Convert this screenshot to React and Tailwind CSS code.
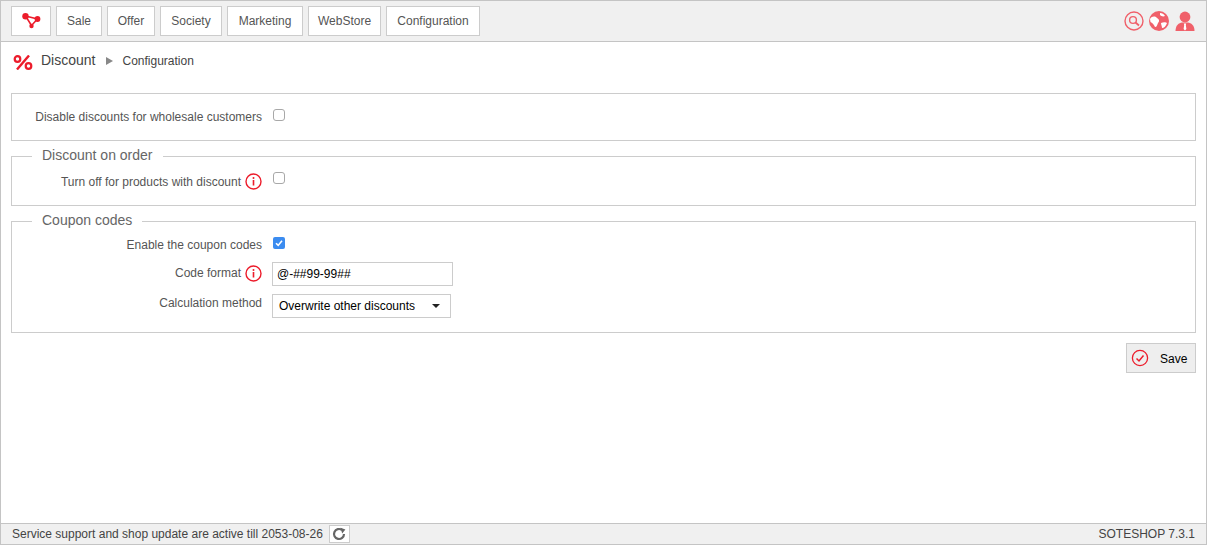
import React from "react";

function InfoIcon() {
  return (
    <svg width="17" height="17" viewBox="0 0 17 17" className="shrink-0">
      <circle cx="8.5" cy="8.5" r="7.5" fill="none" stroke="#ec1c2b" strokeWidth="1.4" />
      <circle cx="8.5" cy="5" r="1" fill="#ec1c2b" />
      <rect x="7.7" y="7" width="1.6" height="5.5" fill="#ec1c2b" />
    </svg>
  );
}

function Checkbox({ checked }) {
  if (checked) {
    return (
      <span className="ml-[1px] flex h-[12px] w-[12px] items-center justify-center rounded-[2px] bg-[#3b8cf0]">
        <svg width="10" height="10" viewBox="0 0 10 10">
          <path d="M2 5.2 L4.2 7.4 L8 2.8" fill="none" stroke="#fff" strokeWidth="1.6" />
        </svg>
      </span>
    );
  }
  return <span className="ml-[1px] block h-[12px] w-[12px] rounded-[3px] border border-[#a8a8a8] bg-white" />;
}

function NavButton({ children, className }) {
  return (
    <div className={"flex h-[30px] items-center justify-center border border-[#cccccc] bg-white text-[12px] text-[#555555] " + className}>
      {children}
    </div>
  );
}

function Legend({ children }) {
  return <legend className="ml-[20px] px-[10px] pb-[2px] text-[14px] leading-[16px] text-[#666666]">{children}</legend>;
}

function Row({ label, info, children, className, labelClass = "" }) {
  return (
    <div className={"flex " + className}>
      <div className={"flex w-[250px] items-center justify-end gap-[4px] text-[12px] text-[#555555] " + labelClass}>
        <span>{label}</span>
        {info && <InfoIcon />}
      </div>
      <div className="ml-[10px] flex items-center">{children}</div>
    </div>
  );
}

export default function App() {
  return (
    <div className="flex h-[545px] w-[1207px] flex-col border border-[#c4c4c4] bg-white font-['Liberation_Sans',Arial,sans-serif]">
      <header className="flex h-[41px] shrink-0 items-center border-b border-[#c4c4c4] bg-[#f0f0f0] pl-[10px] pr-[11px]">
        <nav className="flex gap-[5px]">
          <NavButton className="w-[40px]">
            <svg width="19" height="16" viewBox="0 0 19 16">
              <path d="M3.5 3 L15.5 6 L9.5 12.5 Z" fill="none" stroke="#ec1c2b" strokeWidth="1.6" />
              <circle cx="3.5" cy="3.2" r="3.2" fill="#ec1c2b" />
              <circle cx="15.5" cy="6" r="2.9" fill="#ec1c2b" />
              <circle cx="9.5" cy="13" r="2.2" fill="#ec1c2b" />
            </svg>
          </NavButton>
          <NavButton className="w-[46px]">Sale</NavButton>
          <NavButton className="w-[48px]">Offer</NavButton>
          <NavButton className="w-[62px]">Society</NavButton>
          <NavButton className="w-[76px]">Marketing</NavButton>
          <NavButton className="w-[73px]">WebStore</NavButton>
          <NavButton className="w-[94px]">Configuration</NavButton>
        </nav>
        <div className="ml-auto flex items-center gap-[5px]">
          <svg width="20" height="20" viewBox="0 0 20 20">
            <circle cx="10" cy="10" r="9" fill="none" stroke="#f0606a" strokeWidth="1.4" />
            <circle cx="9" cy="9" r="3.4" fill="none" stroke="#f0606a" strokeWidth="1.4" />
            <path d="M11.5 11.5 L15 14.5" stroke="#f0606a" strokeWidth="1.8" />
          </svg>
          <svg width="20" height="20" viewBox="0 0 20 20">
            <circle cx="10" cy="10" r="10" fill="#f0606a" />
            <path d="M1 8 C3 5 6 5 8 7 C10 8 11 10 9 12 C8 14 8 16 6 16 C5 14 4 12 1.5 11 Z M12 12 C14 11 17 11 18 12 C17 15 15 17 13 17 C13 15 12 14 12 12 Z M11 2 C13 2 15 3 16 5 C14 6 12 5 11 4 Z" fill="#ffffff" />
          </svg>
          <svg width="20" height="20" viewBox="0 0 20 20" className="ml-[1px]">
            <circle cx="10" cy="6" r="5.4" fill="#f0606a" />
            <path d="M0.5 20 C0.5 14 4 12 7 11.5 L13 11.5 C16 12 19.5 14 19.5 20 Z" fill="#f0606a" />
            <path d="M8.8 12.5 H11.2 L10.8 14 L11.4 18 L10 19.5 L8.6 18 L9.2 14 Z" fill="#ffffff" />
          </svg>
        </div>
      </header>

      <main className="flex min-h-0 flex-1 flex-col px-[10px]">
        <div className="flex h-[38px] items-center pl-[2px]">
          <svg width="20" height="15" viewBox="0 0 20 15" className="mt-[2px]">
            <circle cx="4.5" cy="4" r="2.8" fill="none" stroke="#ec1c2b" strokeWidth="2.2" />
            <circle cx="15.5" cy="11" r="2.8" fill="none" stroke="#ec1c2b" strokeWidth="2.2" />
            <path d="M16 0.5 L4 14.5" stroke="#ec1c2b" strokeWidth="2.4" />
          </svg>
          <span className="mb-[2px] ml-[8px] text-[14px] text-[#444444]">Discount</span>
          <svg width="7" height="8" viewBox="0 0 7 8" className="ml-[11px]">
            <path d="M0 0 L7 4 L0 8 Z" fill="#888888" />
          </svg>
          <span className="ml-[9px] text-[12px] text-[#444444]">Configuration</span>
        </div>

        <div className="mt-[13px] flex h-[48px] items-start border border-[#cccccc] pt-[16px]">
          <Row label="Disable discounts for wholesale customers" className="h-[14px] w-full">
            <span className="-mt-[4px]"><Checkbox /></span>
          </Row>
        </div>

        <fieldset className="mt-[6px] h-[59px] border border-[#cccccc] pt-[8px]">
          <Legend>Discount on order</Legend>
          <Row label="Turn off for products with discount" info className="h-[17px]">
            <span className="-mt-[8px]"><Checkbox /></span>
          </Row>
        </fieldset>

        <fieldset className="mt-[6px] h-[121px] border border-[#cccccc] pt-[6px]">
          <Legend>Coupon codes</Legend>
          <Row label="Enable the coupon codes" className="h-[17px]">
            <span className="-mt-[3px]"><Checkbox checked /></span>
          </Row>
          <Row label="Code format" info labelClass="pb-[2px]" className="mt-[9px] h-[24px]">
            <input readOnly value="@-##99-99##" className="h-[24px] w-[181px] border border-[#cccccc] bg-white px-[4px] text-[12px] text-black outline-none" />
          </Row>
          <div className="mt-[8px] flex">
            <div className="mt-[2px] flex h-[14px] w-[250px] justify-end text-[12px] leading-[14px] text-[#555555]">Calculation method</div>
            <div className="ml-[10px] flex h-[24px] w-[179px] items-center justify-between border border-[#cccccc] bg-white pl-[6px] pr-[10px] text-[12px] text-black">
              <span>Overwrite other discounts</span>
              <svg width="8" height="4" viewBox="0 0 8 4"><path d="M0 0 H8 L4 4 Z" fill="#222222" /></svg>
            </div>
          </div>
        </fieldset>

        <div className="mt-[10px] flex justify-end">
          <button className="flex h-[30px] w-[70px] items-center border border-[#cccccc] bg-[#eeeeee] pl-[4px] text-[12px] text-black">
            <svg width="18" height="18" viewBox="0 0 18 18">
              <circle cx="9" cy="9" r="7.6" fill="none" stroke="#ec1c2b" strokeWidth="1.3" />
              <path d="M5.5 9.5 L8 12 L12.5 6.5" fill="none" stroke="#ec1c2b" strokeWidth="1.5" />
            </svg>
            <span className="ml-[11px] mt-[2px]">Save</span>
          </button>
        </div>
      </main>

      <footer className="flex h-[21px] shrink-0 items-center justify-between border-t border-[#c4c4c4] bg-[#f0f0f0] pl-[11px] pr-[11px] text-[12px] text-[#444444]">
        <div className="flex items-center gap-[6px]">
          <span>Service support and shop update are active till 2053-08-26</span>
          <span className="flex h-[18px] w-[21px] items-center justify-center border border-[#cccccc] bg-white">
            <svg width="14" height="14" viewBox="0 0 14 14">
              <path d="M12 7 A5 5 0 1 1 10 3" fill="none" stroke="#666666" strokeWidth="2.2" />
              <path d="M8.5 0.8 L13.4 2.5 L10.2 6.6 Z" fill="#666666" />
            </svg>
          </span>
        </div>
        <span>SOTESHOP 7.3.1</span>
      </footer>
    </div>
  );
}
